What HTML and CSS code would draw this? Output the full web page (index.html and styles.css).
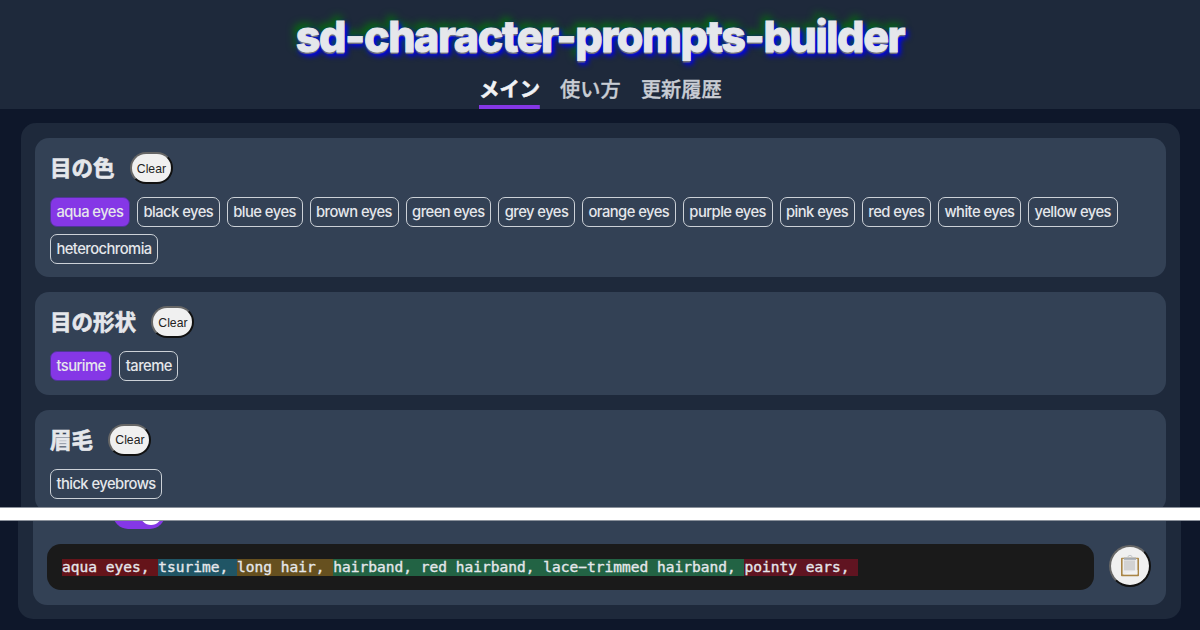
FILE: index.html
```html
<!DOCTYPE html>
<html lang="ja">
<head>
<meta charset="utf-8">
<title>sd-character-prompts-builder</title>
<link rel="stylesheet" href="styles.css">
</head>
<body>
<div class="view-top">
  <header class="header">
    <h1 class="title">sd-character-prompts-builder</h1>
    <nav class="tabs">
      <a class="tab tab-active">メイン</a>
      <a class="tab">使い方</a>
      <a class="tab">更新履歴</a>
    </nav>
  </header>
  <main class="panel">
    <section class="card">
      <div class="card-head"><h2 class="card-title">目の色</h2><button class="clear">Clear</button></div>
      <div class="chips">
        <span class="chip chip-on">aqua eyes</span>
        <span class="chip">black eyes</span>
        <span class="chip">blue eyes</span>
        <span class="chip">brown eyes</span>
        <span class="chip">green eyes</span>
        <span class="chip">grey eyes</span>
        <span class="chip">orange eyes</span>
        <span class="chip">purple eyes</span>
        <span class="chip">pink eyes</span>
        <span class="chip">red eyes</span>
        <span class="chip">white eyes</span>
        <span class="chip">yellow eyes</span>
        <span class="chip">heterochromia</span>
      </div>
    </section>
    <section class="card">
      <div class="card-head"><h2 class="card-title">目の形状</h2><button class="clear">Clear</button></div>
      <div class="chips">
        <span class="chip chip-on">tsurime</span>
        <span class="chip">tareme</span>
      </div>
    </section>
    <section class="card">
      <div class="card-head"><h2 class="card-title">眉毛</h2><button class="clear">Clear</button></div>
      <div class="chips">
        <span class="chip">thick eyebrows</span>
      </div>
    </section>
  </main>
</div>
<div class="divider"></div>
<div class="view-bottom">
  <div class="panel-end">
    <div class="output">
      <div class="toggle-row"><span class="toggle"><span class="knob"></span></span></div>
      <div class="output-row">
        <div class="prompt"><span class="red">aqua eyes, </span><span class="teal">tsurime, </span><span class="gold">long hair, </span><span class="green">hairband, red hairband, lace−trimmed hairband, </span><span class="wine">pointy ears, </span></div>
        <button class="copy" aria-label="Copy">
          <svg width="20" height="22" viewBox="0 0 20 22">
            <rect x="1" y="2.8" width="18" height="18.4" rx="0.8" fill="#a98545"/>
            <rect x="2.6" y="3.8" width="14.8" height="15.6" fill="#ededee"/>
            <rect x="4" y="5.4" width="11" height="10" fill="#d2d2d2"/>
            <path d="M2.6 19.4h14.8V15z" fill="#f3f3f3"/>
            <rect x="4" y="2.6" width="12" height="2.2" fill="#a4a9b0"/>
            <path d="M7.8 2.6a2.2 2.2 0 0 1 4.4 0" fill="none" stroke="#c2c5ca" stroke-width="1"/>
          </svg>
        </button>
      </div>
    </div>
  </div>
</div>
</body>
</html>
```
FILE: styles.css
```css
* { box-sizing: border-box; }
body {
  margin: 0;
  width: 1200px;
  height: 630px;
  overflow: hidden;
  background: #0e172a;
  color: #e5e7eb;
  font-family: Inter, "Noto Sans CJK JP", sans-serif;
}
.view-top { height: 507px; overflow: hidden; }
.header {
  height: 109px;
  background: #1e293b;
  display: flex;
  flex-direction: column;
  align-items: center;
  justify-content: space-between;
}
.title {
  margin: 9px 0 0;
  font-size: 43px;
  line-height: 54px;
  font-weight: 800;
  letter-spacing: -1.37px;
  white-space: nowrap;
  -webkit-text-stroke: 0.9px #e5e7eb;
  text-shadow: 0 1.5px 1px #777, 2px 3px 6px #00f, 2px 3px 5px #0000d8, -3px -4px 8px #008000;
}
.tabs { display: flex; gap: 20.2px; padding-left: 1px; }
.tab {
  height: 36px;
  font-size: 20.2px;
  line-height: 34px;
  font-weight: 500;
  color: #c9cdd4;
  -webkit-text-stroke: 0.35px #c9cdd4;
}
.tab-active {
  font-weight: 700;
  color: #f1f2f5;
  -webkit-text-stroke: 0.6px #f1f2f5;
  background: linear-gradient(#8537e6, #8537e6) bottom / 100% 4px no-repeat;
  border-radius: 3px 3px 0 0;
}
.panel {
  margin: 14px 20px 0 21px;
  padding: 15px 14px;
  background: #1e293b;
  border-radius: 15px;
  display: flex;
  flex-direction: column;
  gap: 15px;
}
.card {
  background: #334155;
  border-radius: 14px;
  padding: 14px 15px 13.7px;
}
.card-head { display: flex; align-items: center; gap: 15.4px; height: 32px; margin-bottom: 13px; }
.card-title {
  margin: 0;
  font-size: 21.5px;
  line-height: 32px;
  font-weight: 700;
  -webkit-text-stroke: 0.7px #e5e7eb;
}
.clear {
  width: 43px;
  height: 32px;
  padding: 1px 0 0;
  border: 2px outset #666;
  border-radius: 16px;
  background: #f0f0f0;
  color: #222;
  font: 12.2px "Liberation Sans", sans-serif;
}
.chips { display: flex; flex-wrap: wrap; gap: 7.1px; }
.chip {
  height: 29.8px;
  padding: 0 5.6px 0 5.4px;
  border: 1px solid #ccd1d7;
  border-radius: 7px;
  font-size: 14.75px;
  line-height: 28px;
  font-weight: 500;
  letter-spacing: -0.54px;
  white-space: nowrap;
}
.chip-on { background: #8537e6; border-color: #4f3599; }
.divider { height: 14px; background: #fff; border: solid #8b919b; border-width: 1px 0; }
.view-bottom { height: 109px; }
.panel-end {
  height: 98px;
  margin: 0 19px 0 18px;
  padding: 0 15px 14px;
  background: #1e293b;
  border-radius: 0 0 15px 15px;
}
.output {
  height: 84px;
  padding: 0 14px;
  background: #334155;
  border-radius: 0 0 14px 14px;
}
.toggle-row { height: 23px; padding-left: 66px; overflow: hidden; }
.toggle {
  display: flex;
  justify-content: flex-end;
  width: 52px;
  height: 30px;
  margin-top: -22px;
  padding: 4px 3px;
  border-radius: 15px;
  background: #8537e6;
}
.knob { width: 22px; height: 22px; border-radius: 50%; background: #fff; }
.output-row { display: flex; align-items: flex-start; gap: 15px; }
.prompt {
  width: 1047px;
  height: 46px;
  padding: 0 15px;
  border-radius: 14px;
  background: #1a1a1a;
  font-family: "DejaVu Sans Mono", monospace;
  font-size: 14.54px;
  line-height: 46px;
  white-space: pre;
  -webkit-text-stroke: 0.35px #e5e7eb;
}
.prompt span { padding: 0 0 1px; }
.red { background: #65141a; }
.teal { background: #205565; }
.gold { background: #66501f; }
.green { background: #226344; }
.wine { background: #601421; }
.copy {
  display: flex;
  align-items: center;
  justify-content: center;
  width: 42px;
  height: 42px;
  margin-top: 1px;
  padding: 0 0 1px;
  border: 2px outset #666;
  border-radius: 50%;
  background: #f0f0f0;
}
```
